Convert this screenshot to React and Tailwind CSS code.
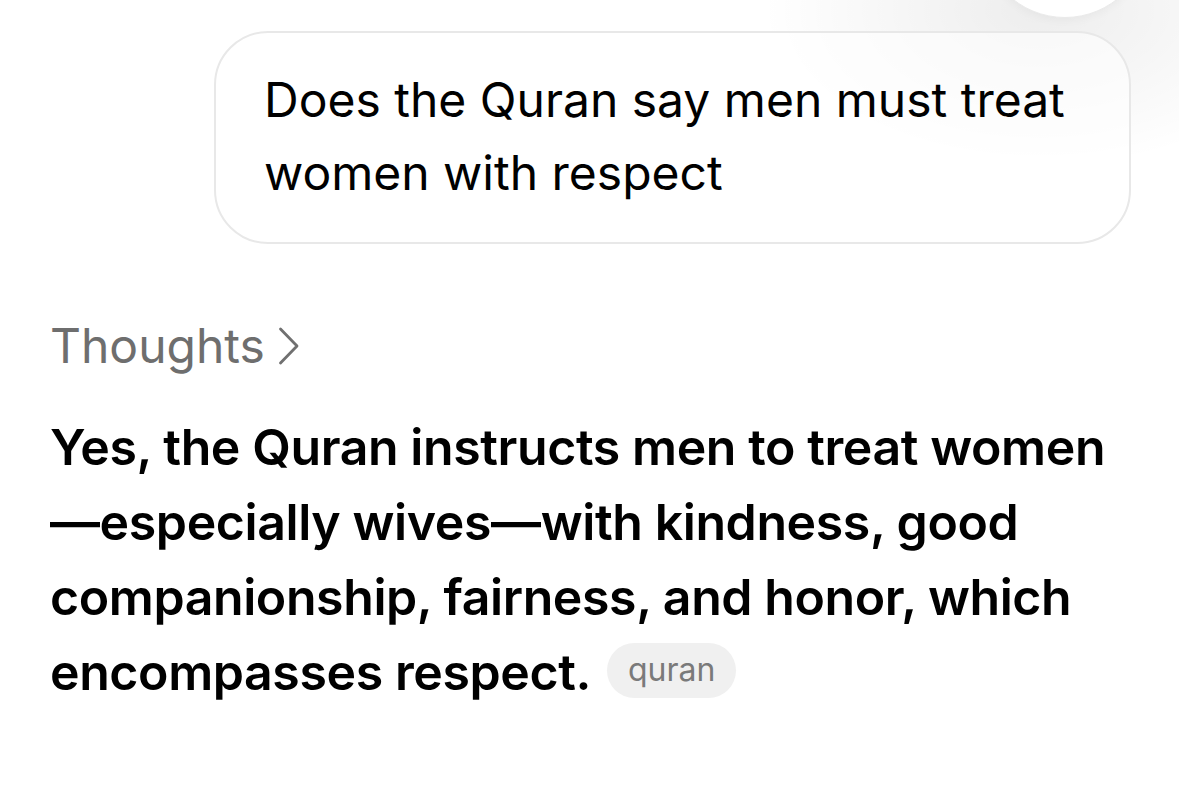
import React from "react";

export default function App() {
  return (
    <div
      className="relative h-[791px] w-full overflow-hidden bg-white text-black"
      style={{ fontFamily: "Inter, 'Noto Sans', sans-serif" }}
    >
      {/* top-right fade from floating button */}
      <div className="pointer-events-none absolute right-[-140px] top-[-150px] h-[320px] w-[560px] rounded-full bg-[radial-gradient(ellipse_at_center,rgba(0,0,0,0.07),rgba(0,0,0,0)_70%)]" />
      <div className="absolute left-[981px] top-[-150px] h-[168px] w-[168px] rounded-full border border-[#eaeaea] bg-white shadow-[0_2px_10px_rgba(0,0,0,0.04)]" />

      <div className="relative px-[48px]">
        <div className="mt-[31px] flex justify-end">
          <div className="w-[917px] rounded-[54px] border-2 border-[#e8e8e8] bg-white/60 px-[48px] pb-[33px] pt-[30px] text-[48px] leading-[73px]">
            Does the Quran say men must treat women with respect
          </div>
        </div>

        <div className="mt-[72px] flex items-center pl-[2px] text-[48px] leading-[60px] text-[#6e6e6e]">
          <span>Thoughts</span>
          <svg
            className="ml-[12px]"
            width="24"
            height="40"
            viewBox="0 0 24 40"
            fill="none"
            stroke="#707070"
            strokeWidth="2.8"
            strokeLinecap="round"
            strokeLinejoin="round"
          >
            <path d="M3.5 3 L20 20 L3.5 37" />
          </svg>
        </div>

        <div className="mt-[34px] w-[1100px] pl-[2px] text-[50px] font-semibold leading-[75px] tracking-[-0.4px]">
          Yes, the Quran instructs men to treat women—especially wives—with kindness, good companionship, fairness, and honor, which encompasses respect.
          <span className="ml-[16px] inline-flex h-[55px] items-center rounded-full bg-[#f0f0f0] px-[21px] align-[9px] text-[32px] font-normal leading-none tracking-normal text-[#7a7a7a]">
            quran
          </span>
        </div>
      </div>
    </div>
  );
}
